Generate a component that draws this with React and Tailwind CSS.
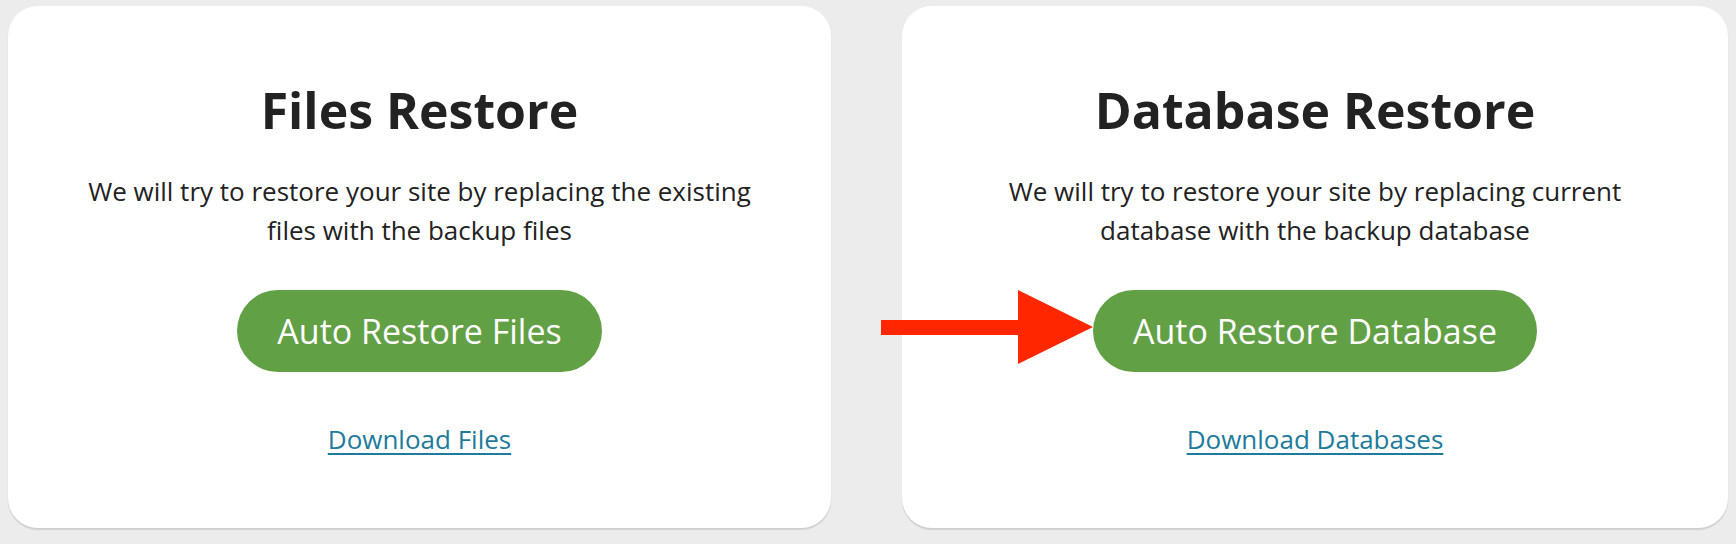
import React from 'react'

const cards = [
  {
    title: 'Files Restore',
    lines: ['We will try to restore your site by replacing the existing', 'files with the backup files'],
    button: 'Auto Restore Files',
    link: 'Download Files',
  },
  {
    title: 'Database Restore',
    lines: ['We will try to restore your site by replacing current', 'database with the backup database'],
    button: 'Auto Restore Database',
    link: 'Download Databases',
  },
]

const RestoreCard = ({ card }) => (
  <div className="bg-white rounded-[30px] shadow-[0_2px_1px_rgba(0,0,0,0.12)] h-[522px] flex flex-col items-center pt-[74px] text-center">
    <h2 className="text-[50px] leading-[60px] font-bold text-[#222222]">{card.title}</h2>
    <p className="mt-[32px] text-[26px] leading-[39px] text-[#222222]">
      {card.lines[0]}
      <br />
      {card.lines[1]}
    </p>
    <button className="mt-[40px] h-[82px] px-[40px] rounded-full bg-[#62a046] text-white text-[34px] leading-[40px]">
      {card.button}
    </button>
    <a href="#" className="mt-[48px] text-[26px] leading-[39px] text-[#1e7b9b] underline underline-offset-[4px] decoration-2">
      {card.link}
    </a>
  </div>
)

export default function App() {
  return (
    <div className="relative w-[1736px] h-[544px] bg-[#ececec] px-[8px] pt-[6px] font-['Open_Sans',sans-serif]">
      <div className="grid grid-cols-[823px_826px] gap-[71px]">
        {cards.map(card => (
          <RestoreCard key={card.title} card={card} />
        ))}
      </div>

      {/* annotation arrow */}
      <svg className="absolute left-[881px] top-[290px]" width="212" height="75" viewBox="0 0 212 75">
        <rect x="0" y="30" width="138" height="15" fill="#ff2600" />
        <polygon points="137,0 212,37 137,74" fill="#ff2600" />
      </svg>
    </div>
  )
}
